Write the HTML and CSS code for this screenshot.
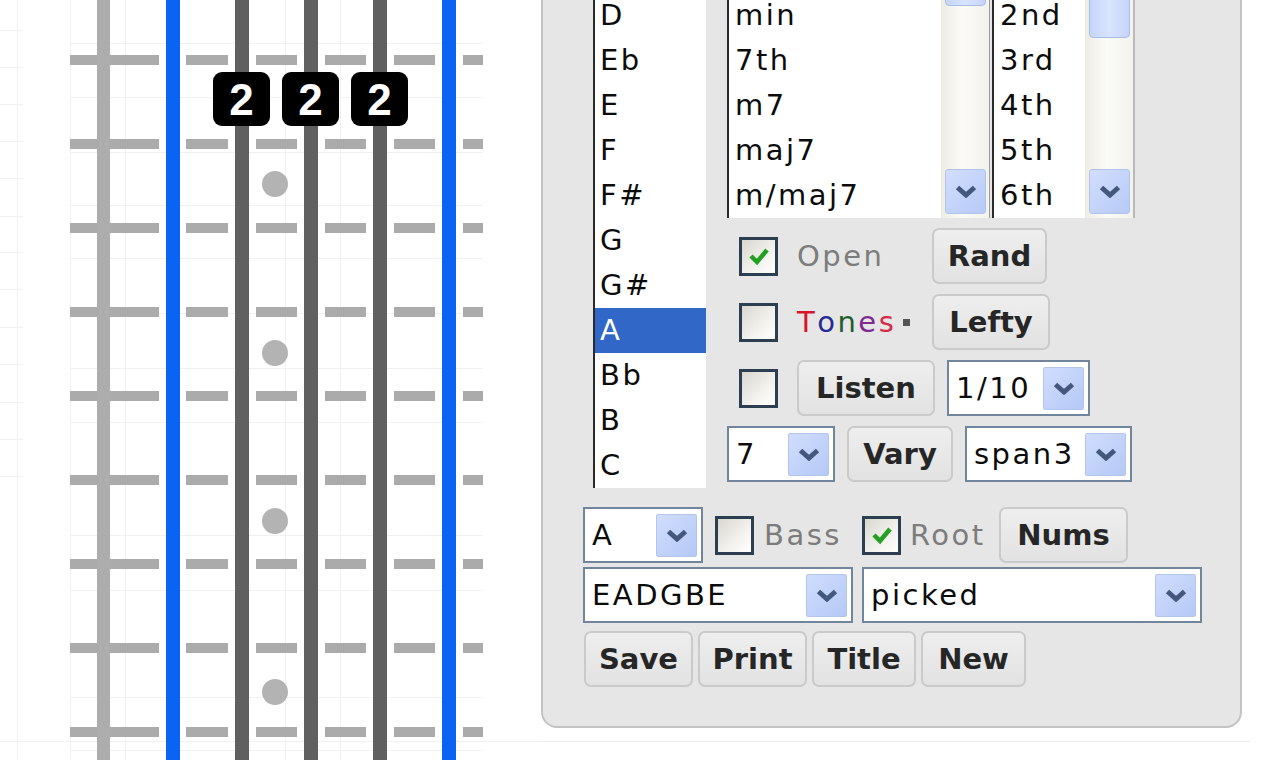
FILE: index.html
```html
<!DOCTYPE html>
<html>
<head>
<meta charset="utf-8">
<title>Chord finder</title>
<link rel="stylesheet" href="styles.css">
</head>
<body>
<div class="page">
  <svg class="board" width="541" height="760" viewBox="0 0 541 760">
    <defs>
      <g id="fret" class="fret">
        <rect x="70" y="-5" width="89" height="10"/>
        <rect x="186" y="-5" width="42" height="10"/>
        <rect x="256" y="-5" width="41" height="10"/>
        <rect x="325" y="-5" width="41" height="10"/>
        <rect x="394" y="-5" width="41" height="10"/>
        <rect x="463" y="-5" width="20" height="10"/>
      </g>
    </defs>
    <g class="faint">
      <line x1="17.5" y1="0" x2="17.5" y2="760"/>
      <line x1="70.5" y1="0" x2="70.5" y2="760"/>
      <line x1="125.5" y1="0" x2="125.5" y2="760"/>
      <line x1="285.5" y1="0" x2="285.5" y2="760"/>
      <line x1="340.5" y1="0" x2="340.5" y2="760"/>
      <line x1="70" y1="43.5" x2="483" y2="43.5"/>
      <line x1="70" y1="97.5" x2="483" y2="97.5"/>
      <line x1="70" y1="152.5" x2="483" y2="152.5"/>
      <line x1="70" y1="205.5" x2="483" y2="205.5"/>
      <line x1="70" y1="258.5" x2="483" y2="258.5"/>
      <line x1="70" y1="313.5" x2="483" y2="313.5"/>
      <line x1="70" y1="368.5" x2="483" y2="368.5"/>
      <line x1="70" y1="422.5" x2="483" y2="422.5"/>
      <line x1="70" y1="535.5" x2="483" y2="535.5"/>
      <line x1="70" y1="590.5" x2="483" y2="590.5"/>
      <line x1="70" y1="697.5" x2="483" y2="697.5"/>
      <line x1="70" y1="750.5" x2="483" y2="750.5"/>
      <line x1="0" y1="30.5" x2="23" y2="30.5"/>
      <line x1="0" y1="67.5" x2="23" y2="67.5"/>
      <line x1="0" y1="104.5" x2="23" y2="104.5"/>
      <line x1="0" y1="141.5" x2="23" y2="141.5"/>
      <line x1="0" y1="178.5" x2="23" y2="178.5"/>
      <line x1="0" y1="216.5" x2="23" y2="216.5"/>
      <line x1="0" y1="252.5" x2="23" y2="252.5"/>
      <line x1="0" y1="289.5" x2="23" y2="289.5"/>
      <line x1="0" y1="327.5" x2="23" y2="327.5"/>
      <line x1="0" y1="364.5" x2="23" y2="364.5"/>
      <line x1="0" y1="402.5" x2="23" y2="402.5"/>
      <line x1="0" y1="439.5" x2="23" y2="439.5"/>
      <line x1="0" y1="476.5" x2="23" y2="476.5"/>
      <line x1="0" y1="741.5" x2="541" y2="741.5"/>
    </g>
    <use href="#fret" y="60"/>
    <use href="#fret" y="144"/>
    <use href="#fret" y="228"/>
    <use href="#fret" y="312"/>
    <use href="#fret" y="396"/>
    <use href="#fret" y="480"/>
    <use href="#fret" y="564"/>
    <use href="#fret" y="648"/>
    <use href="#fret" y="732"/>
    <rect class="nut" x="97" y="0" width="13" height="760"/>
    <rect class="edge" x="166" y="0" width="14" height="760"/>
    <rect class="str" x="235" y="0" width="14" height="760"/>
    <rect class="str" x="304" y="0" width="14" height="760"/>
    <rect class="str" x="373" y="0" width="14" height="760"/>
    <rect class="edge" x="442" y="0" width="14" height="760"/>
    <circle class="dot" cx="275" cy="184" r="13"/>
    <circle class="dot" cx="275" cy="353" r="13"/>
    <circle class="dot" cx="275" cy="521" r="13"/>
    <circle class="dot" cx="275" cy="692" r="13"/>
    <rect class="badge" x="213" y="72" width="57" height="54" rx="9"/>
    <rect class="badge" x="282" y="72" width="57" height="54" rx="9"/>
    <rect class="badge" x="351" y="72" width="57" height="54" rx="9"/>
    <text class="finger" x="241.5" y="115">2</text>
    <text class="finger" x="310.5" y="115">2</text>
    <text class="finger" x="379.5" y="115">2</text>
  </svg>

  <div class="panel">
    <div class="top">
      <div class="list notes">
        <div class="it gap"></div>
        <div class="it">D</div>
        <div class="it">Eb</div>
        <div class="it">E</div>
        <div class="it">F</div>
        <div class="it">F#</div>
        <div class="it">G</div>
        <div class="it">G#</div>
        <div class="it chosen">A</div>
        <div class="it">Bb</div>
        <div class="it">B</div>
        <div class="it">C</div>
      </div>
      <div class="rcol">
        <div class="lists">
          <div class="list types">
            <div class="items">
              <div class="it gap"></div>
              <div class="it">min</div>
              <div class="it">7th</div>
              <div class="it">m7</div>
              <div class="it">maj7</div>
              <div class="it">m/maj7</div>
            </div>
            <div class="sb">
              <div class="sbbtn up"></div>
              <div class="thumb t1"></div>
              <div class="sbfill"></div>
              <div class="sbbtn down"><svg class="chev" viewBox="0 0 22 13" width="22" height="13"><polyline points="2.5,2.5 11,10 19.5,2.5"/></svg></div>
            </div>
          </div>
          <div class="list ints">
            <div class="items">
              <div class="it gap"></div>
              <div class="it">2nd</div>
              <div class="it">3rd</div>
              <div class="it">4th</div>
              <div class="it">5th</div>
              <div class="it">6th</div>
            </div>
            <div class="sb">
              <div class="sbbtn up"></div>
              <div class="thumb t2"></div>
              <div class="sbfill"></div>
              <div class="sbbtn down"><svg class="chev" viewBox="0 0 22 13" width="22" height="13"><polyline points="2.5,2.5 11,10 19.5,2.5"/></svg></div>
            </div>
          </div>
        </div>

        <div class="row r1">
          <span class="cb on"><svg class="tick" viewBox="0 0 24 24" width="24" height="24"><polyline points="4,12 10,18 20,6"/></svg></span>
          <span class="lbl w135">Open</span>
          <button class="btn" style="width:115px">Rand</button>
        </div>
        <div class="row r1">
          <span class="cb"></span>
          <span class="lbl w135 tones"><span class="c1">T</span><span class="c2">o</span><span class="c3">n</span><span class="c4">e</span><span class="c5">s</span><span class="sq"></span></span>
          <button class="btn" style="width:118px">Lefty</button>
        </div>
        <div class="row r1">
          <span class="cb"></span>
          <button class="btn" style="width:138px">Listen</button>
          <div class="sel ml12" style="width:143px"><span class="v">1/10</span><span class="dd"><svg class="chev" viewBox="0 0 22 13" width="22" height="13"><polyline points="2.5,2.5 11,10 19.5,2.5"/></svg></span></div>
        </div>
        <div class="row r4">
          <div class="sel" style="width:108px"><span class="v">7</span><span class="dd"><svg class="chev" viewBox="0 0 22 13" width="22" height="13"><polyline points="2.5,2.5 11,10 19.5,2.5"/></svg></span></div>
          <button class="btn ml12" style="width:106px">Vary</button>
          <div class="sel ml12" style="width:167px"><span class="v">span3</span><span class="dd"><svg class="chev" viewBox="0 0 22 13" width="22" height="13"><polyline points="2.5,2.5 11,10 19.5,2.5"/></svg></span></div>
        </div>
      </div>
    </div>

    <div class="row r5">
      <div class="sel" style="width:120px"><span class="v">A</span><span class="dd"><svg class="chev" viewBox="0 0 22 13" width="22" height="13"><polyline points="2.5,2.5 11,10 19.5,2.5"/></svg></span></div>
      <span class="cb ml12"></span>
      <span class="lbl bass">Bass</span>
      <span class="cb on"><svg class="tick" viewBox="0 0 24 24" width="24" height="24"><polyline points="4,12 10,18 20,6"/></svg></span>
      <span class="lbl root">Root</span>
      <button class="btn" style="width:129px">Nums</button>
    </div>
    <div class="row r6">
      <div class="sel" style="width:270px"><span class="v">EADGBE</span><span class="dd"><svg class="chev" viewBox="0 0 22 13" width="22" height="13"><polyline points="2.5,2.5 11,10 19.5,2.5"/></svg></span></div>
      <div class="sel ml9" style="width:340px"><span class="v">picked</span><span class="dd"><svg class="chev" viewBox="0 0 22 13" width="22" height="13"><polyline points="2.5,2.5 11,10 19.5,2.5"/></svg></span></div>
    </div>
    <div class="row r7">
      <button class="btn" style="width:109px">Save</button>
      <button class="btn" style="width:109px">Print</button>
      <button class="btn" style="width:104px">Title</button>
      <button class="btn" style="width:105px">New</button>
    </div>
  </div>
</div>
</body>
</html>
```

FILE: styles.css
```css
* { box-sizing: border-box; }
html, body { margin: 0; height: 100%; }
body {
  background: #fff linear-gradient(#ebebeb, #ebebeb) 0 741px / 1250px 1px no-repeat;
  overflow: hidden;
  font-family: "DejaVu Sans", "Liberation Sans", sans-serif;
  color: #111;
}
.page {
  display: flex;
  align-items: flex-start;
  width: 1277px;
  height: 760px;
  overflow: hidden;
}

/* fretboard */
.board { flex: none; display: block; }
.faint line { stroke: #f1f1f1; stroke-width: 1; }
.fret rect { fill: #ababab; }
.nut { fill: #adadad; }
.edge { fill: #0a63f2; }
.str { fill: #606060; }
.dot { fill: #b3b3b3; }
.badge { fill: #000; }
.finger {
  fill: #fff;
  font-family: "Liberation Sans", Arial, sans-serif;
  font-weight: bold;
  font-size: 44px;
  text-anchor: middle;
}

/* panel */
.panel {
  flex: none;
  width: 701px;
  margin-top: -54px;
  border: 2px solid #c3c3c3;
  border-radius: 16px;
  background: #e6e6e6;
  padding: 0 0 39px 40px;
}
.top {
  display: flex;
  align-items: flex-start;
  height: 540px;
}
.list {
  background: #fff;
  border-left: 2px solid #2a2a2a;
  font-size: 29px;
  letter-spacing: 2.5px;
  line-height: 45px;
  white-space: nowrap;
  color: #0c0c0c;
}
.it { height: 45px; }
.notes {
  margin-left: 10px;
  width: 113px;
  height: 540px;
}
.notes .it { padding-left: 5px; }
.notes .it.chosen { background: #3168c8; color: #fff; }

.rcol { margin-left: 21px; width: 408px; }
.lists { display: flex; gap: 2px; height: 270px; }
.types { width: 263px; display: flex; border-right: 1px solid #9c9c9c; }
.ints { width: 143px; display: flex; border-right: 2px solid #b9b9b9; }
.items { flex: 1; padding-left: 6px; overflow: hidden; }

.sb {
  flex: none;
  width: 48px;
  display: flex;
  flex-direction: column;
  gap: 2px;
  padding: 3px 3px 4px 4px;
  background: linear-gradient(90deg, #eeece4, #fbfbf8 45%, #f3f2ec);
}
.sbbtn {
  flex: none;
  border: 1px solid #b2c3ea;
  border-radius: 3px;
  background: linear-gradient(135deg, #d2defd, #b6caf7);
  display: flex;
  align-items: center;
  justify-content: center;
}
.sbbtn.up { height: 38px; }
.sbbtn.down { height: 45px; }
.thumb {
  flex: none;
  border: 1px solid #a8bce6;
  border-radius: 4px;
  background: linear-gradient(90deg, #c5d5fb, #d9e4fd 50%, #c4d4fb);
}
.thumb.t1 { height: 15px; }
.thumb.t2 { height: 47px; }
.sbfill { flex: 1; }

.chev polyline {
  fill: none;
  stroke: #44587d;
  stroke-width: 5;
  stroke-linejoin: miter;
}

/* rows */
.row {
  display: flex;
  align-items: center;
  height: 56px;
}
.r1 { margin-top: 10px; padding-left: 12px; }
.r1 .cb { margin-right: 19px; }
.r4 { margin-top: 10px; }
.r5 { margin-top: 19px; }
.r6 { margin-top: 4px; }
.r7 { margin-top: 8px; padding-left: 1px; gap: 5px; }

.cb {
  flex: none;
  width: 39px;
  height: 39px;
  border: 3px solid #2c3f50;
  background: linear-gradient(135deg, #d9d6cf, #f3f2ee 60%, #fff);
  display: flex;
  align-items: center;
  justify-content: center;
}
.tick polyline {
  fill: none;
  stroke: #22a022;
  stroke-width: 4.5;
}

.lbl {
  flex: none;
  font-size: 29px;
  letter-spacing: 2.5px;
  color: #7c7c7c;
  white-space: nowrap;
}
.w135 { width: 135px; }
.bass { margin-left: 10px; width: 98px; }
.root { margin-left: 9px; width: 89px; }
.tones { display: flex; align-items: center; }
.tones .c1 { color: #d8142c; }
.tones .c2 { color: #262a92; }
.tones .c3 { color: #1d5e2c; }
.tones .c4 { color: #7e2a90; }
.tones .c5 { color: #d62a48; }
.tones .sq {
  width: 7px;
  height: 7px;
  background: #555;
  margin-left: 7px;
}

.btn {
  flex: none;
  height: 56px;
  padding: 0;
  border: 2px solid #cacaca;
  border-radius: 7px;
  background: linear-gradient(#eeeeee, #e2e2e2);
  font-family: "DejaVu Sans", sans-serif;
  font-weight: bold;
  font-size: 29px;
  color: #262626;
  display: flex;
  align-items: center;
  justify-content: center;
}

.sel {
  flex: none;
  height: 56px;
  border: 2px solid #71859d;
  background: #fff;
  display: flex;
  align-items: center;
  padding-left: 7px;
  padding-right: 4px;
}
.sel .v {
  flex: 1;
  font-size: 29px;
  letter-spacing: 2.5px;
  color: #0c0c0c;
  white-space: nowrap;
  overflow: hidden;
}
.dd {
  flex: none;
  width: 41px;
  height: 43px;
  border: 1px solid #b4c5ec;
  border-radius: 2px;
  background: linear-gradient(135deg, #d0ddfd, #b5c9f6);
  display: flex;
  align-items: center;
  justify-content: center;
}

/* spacing helpers (last so they win) */
.row .btn, .row .sel, .row .cb { margin-top: 0; margin-bottom: 0; }
.ml12 { margin-left: 12px; }
.ml9 { margin-left: 9px; }
.r7 .btn { margin: 0; }
```
